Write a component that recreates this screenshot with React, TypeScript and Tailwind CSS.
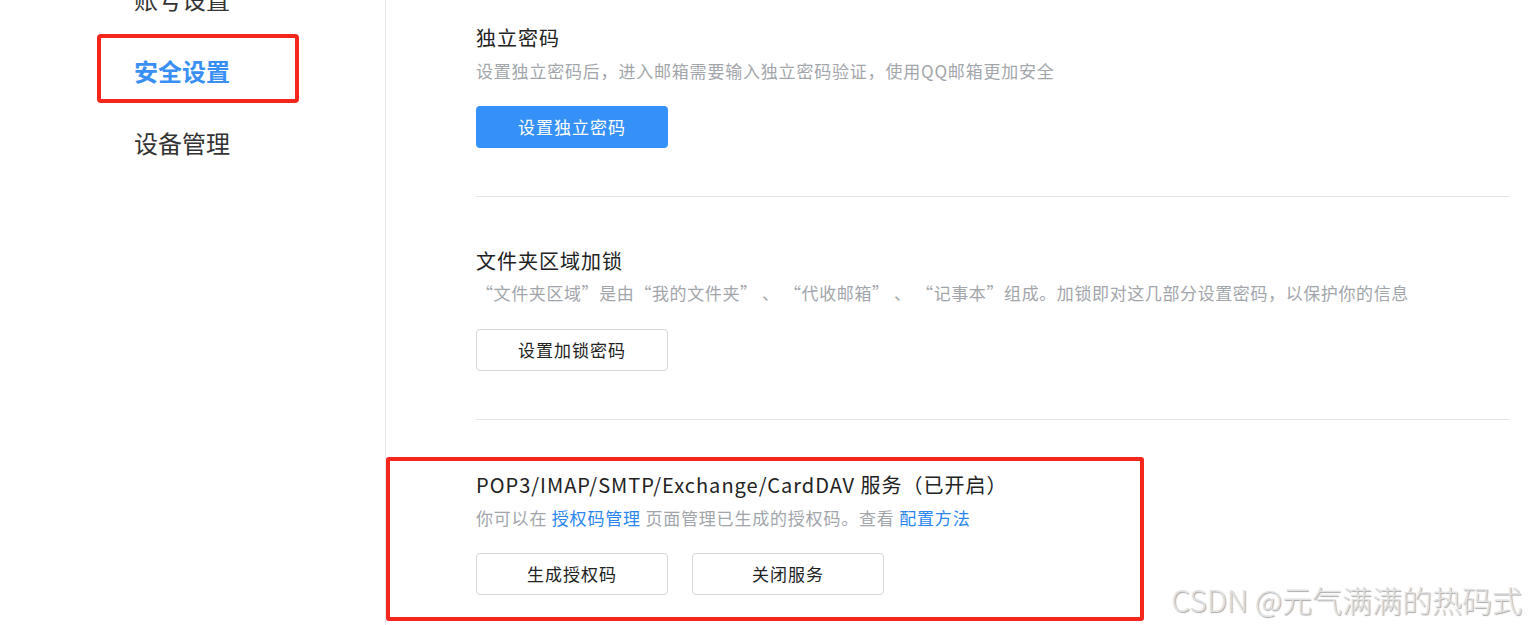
import React from "react"

const navs = ["账号设置", "安全设置", "设备管理"]

function Btn({ primary, children }: { primary?: boolean; children: React.ReactNode }) {
  return (
    <button
      className={
        primary
          ? "h-[42px] w-[192px] rounded-[4px] bg-[#3591f8] text-[17px] tracking-[1px] text-white"
          : "h-[42px] w-[192px] rounded-[4px] border border-[#d4d6d9] bg-white text-[17px] tracking-[1px] text-[#222]"
      }
    >
      {children}
    </button>
  )
}

export default function App() {
  return (
    <div
      className="relative flex h-[625px] w-full overflow-hidden bg-white"
      style={{ fontFamily: '"Noto Sans CJK SC", "Noto Sans", sans-serif' }}
    >
      {/* sidebar */}
      <div className="w-[386px] flex-shrink-0 border-r border-[#e9e9ec]">
        <div className="-mt-[37px] pl-[134px]">
          {navs.map((n, i) => (
            <div key={n} className="relative flex h-[72px] items-center">
              <span
                className={
                  i === 1
                    ? "text-[24px] font-bold text-[#3a8ff5]"
                    : "text-[24px] text-[#333]"
                }
              >
                {n}
              </span>
              {i === 1 && (
                <div className="absolute -left-[37px] -top-[1px] h-[69px] w-[202px] rounded-[4px] border-[4px] border-[#f5261c]" />
              )}
            </div>
          ))}
        </div>
      </div>

      {/* content */}
      <div className="flex-1 pl-[90px] pr-[18px]">
        <div className="border-b border-[#e4e5e7] pt-[24px] pb-[48px]">
          <div className="text-[20px] leading-[28px] tracking-[1px] text-[#222]">独立密码</div>
          <div className="mt-[7px] text-[17px] leading-[24px] tracking-[0.8px] text-[#a2a6ab]">
            设置独立密码后，进入邮箱需要输入独立密码验证，使用QQ邮箱更加安全
          </div>
          <div className="mt-[23px]">
            <Btn primary>设置独立密码</Btn>
          </div>
        </div>

        <div className="border-b border-[#e4e5e7] pt-[50px] pb-[48px]">
          <div className="text-[20px] leading-[28px] tracking-[1px] text-[#222]">文件夹区域加锁</div>
          <div className="mt-[6px] text-[17px] leading-[24px] tracking-[0.6px] text-[#a2a6ab]">
            “文件夹区域”是由“我的文件夹” 、 “代收邮箱” 、 “记事本”组成。加锁即对这几部分设置密码，以保护你的信息
          </div>
          <div className="mt-[24px]">
            <Btn>设置加锁密码</Btn>
          </div>
        </div>

        <div className="relative pt-[51px]">
          <div className="text-[20px] leading-[28px] tracking-[1px] text-[#222]">
            POP3/IMAP/SMTP/Exchange/CardDAV 服务（已开启）
          </div>
          <div className="mt-[7px] text-[17px] leading-[24px] tracking-[0.8px] text-[#a2a6ab]">
            你可以在 <span className="text-[#2b87ef]">授权码管理</span> 页面管理已生成的授权码。查看{" "}
            <span className="text-[#2b87ef]">配置方法</span>
          </div>
          <div className="mt-[23px] flex gap-[24px]">
            <Btn>生成授权码</Btn>
            <Btn>关闭服务</Btn>
          </div>
          <div className="absolute -left-[90px] top-[37px] h-[164px] w-[758px] rounded-[3px] border-[4px] border-[#f5261c]" />
        </div>
      </div>

      <div
        className="absolute right-[6px] bottom-[8px] text-[30px] font-light leading-[36px] text-[#e2e2e2]"
        style={{ textShadow: "1px 1px 1px #a8a8a8" }}
      >
        CSDN @元气满满的热码式
      </div>
    </div>
  )
}
